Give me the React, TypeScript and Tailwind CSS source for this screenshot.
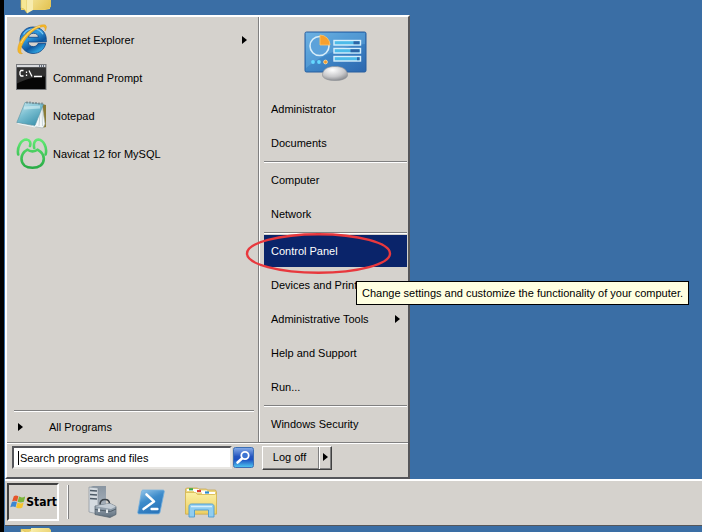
import React from 'react';

type IconProps = { className?: string };

const FolderIcon: React.FC<IconProps> = ({ className }) => (
    <svg className={className} width="32" height="32" viewBox="0 0 32 32" aria-hidden="true">
        <defs>
            <linearGradient id="folderBack" x1="0" y1="0" x2="1" y2="1">
                <stop offset="0" stopColor="#f9efac" />
                <stop offset="1" stopColor="#e2c04c" />
            </linearGradient>
        </defs>
        <path d="M1 3h12l2 3h15v21l-5 1H1z" fill="#e9cf68" />
        <path d="M11 2h18l2 2v21l-4 2-16 1z" fill="url(#folderBack)" />
        <path d="M1 3l6 4v24l-3-4-3-1z" fill="#f6e794" stroke="#d9b84a" strokeWidth="0.6" />
        <path d="M7 7l6-3v24l-6 3.500z" fill="#f7ecae" />
    </svg>
);

const ExplorerIcon = () => (
    <svg width="32" height="32" viewBox="0 0 32 32" aria-hidden="true">
        <defs>
            <linearGradient id="ieBlue" x1="0" y1="0" x2="0.6" y2="1">
                <stop offset="0" stopColor="#1c62b4" />
                <stop offset="0.45" stopColor="#2f9ade" />
                <stop offset="0.75" stopColor="#0d569f" />
                <stop offset="1" stopColor="#31a8e4" />
            </linearGradient>
        </defs>
        <path
            d="M17 3C9.500 3 4 9 4 16C4 23.500 10 29.500 17 29.500C23.500 29.500 28.300 25.500 29.800 19.500H22C21 21.500 19.800 22.600 17.500 22.600C14.300 22.600 12.300 21 12.200 18H30.300V15.500C30.300 8 24.500 3 17 3zM12.500 13.300C12.900 10.800 14.700 9.300 17.600 9.300C20.500 9.300 22.100 10.800 22.400 13.300z"
            fill="url(#ieBlue)"
            stroke="#0f4585"
            strokeWidth="0.8"
            fillRule="evenodd"
        />
        <path d="M7.500 10.500C9.500 6.500 13.500 4.800 17.500 4.800c4 0 7.500 2 9.500 5.500" fill="none" stroke="#7cc8f1" strokeWidth="1.200" />
        <path
            d="M29 7C31 3.500 31 1.500 28.500 0.800C22 -0.500 8.500 8.500 4 17.500C0.500 24.500 1 31 6.500 29.500C4.500 29.300 4 26 6.500 20.500C10.500 12 20 3 27 2.700C29 2.800 29.300 4.500 29 7z"
            fill="#f5b725"
            stroke="#dc9413"
            strokeWidth="0.4"
        />
        <path d="M24 2.300C17 3.500 9 11 5 19" fill="none" stroke="#fde58c" strokeWidth="0.8" />
    </svg>
);

const PromptIcon = () => (
    <svg width="32" height="32" viewBox="0 0 32 32" aria-hidden="true">
        <rect x="0.500" y="2.500" width="29.500" height="25" fill="#060606" stroke="#77797c" />
        <rect x="1" y="3" width="28.500" height="2.500" fill="#d8dadd" />
        <path d="M1 5.500h28.500v9c-12 0-20 3-28.500 7z" fill="#303030" />
        <path d="M23 4h1M25 4h1M27 4h1" stroke="#3e4a5c" strokeWidth="1.500" />
        <path d="M7.500 8.500H5L4 10v2.500L5 14h2.500M10.500 9.500v1.500M10.500 12.500v1.500M13 8.500l3 6M18 14.500h8" fill="none" stroke="#fff" strokeWidth="1.300" />
    </svg>
);

const NotepadIcon = () => (
    <svg width="32" height="32" viewBox="0 0 32 32" aria-hidden="true">
        <defs>
            <linearGradient id="padCover" x1="0" y1="0" x2="0.7" y2="1">
                <stop offset="0" stopColor="#d2edf3" />
                <stop offset="0.5" stopColor="#79bed0" />
                <stop offset="1" stopColor="#3e93ae" />
            </linearGradient>
        </defs>
        <path d="M26 4l4 1v22l-4 1z" fill="#8b7b35" />
        <path d="M26 4l3 20-2 4-12-2z" fill="#f5f8f9" stroke="#9db0b5" strokeWidth="0.6" />
        <path d="M26 8l.5 18M24 12l-1 14" stroke="#bccdd1" strokeWidth="0.8" />
        <path d="M9 2.500L27.500 4L19 25.500L0.800 22.500z" fill="url(#padCover)" stroke="#5793a5" strokeWidth="0.6" />
        <path d="M1.500 23.500L19 27l1-2" fill="none" stroke="#eef6f7" />
        <path d="M11 1.500v2M14 1.500v2M17 2v2M20 2v2M23 2.500v2M26 2.500v2" stroke="#6d7d81" strokeWidth="1.200" />
        <path d="M8 8L24 7" stroke="#d9f1f5" strokeWidth="3" opacity="0.6" />
    </svg>
);

const NavicatIcon = () => (
    <svg width="32" height="32" viewBox="0 0 32 32" aria-hidden="true">
        <defs>
            <linearGradient id="navicatGreen" gradientUnits="userSpaceOnUse" x1="0" y1="1" x2="0" y2="31">
                <stop offset="0" stopColor="#62ea74" />
                <stop offset="1" stopColor="#27a944" />
            </linearGradient>
        </defs>
        <g fill="none" stroke="url(#navicatGreen)" strokeWidth="2.600" strokeLinecap="round" strokeLinejoin="round">
            <path d="M2.200 16.500C0.800 9.500 5 1.500 10.500 1.500C14 1.800 15 5 14 8" />
            <path d="M18.200 10C17.200 5 19 1.500 22.500 1.500C27.500 2 31.500 9.500 29.600 16.500" />
            <path d="M11.500 11.600C8 13.500 5.500 16.500 5.500 20.800C5.500 26.500 10 29.800 16.500 29.800S27.800 26.500 27.800 20.800C27.800 16.500 25 13.500 21.500 11.600C19 14 14 14 11.500 11.600z" />
        </g>
    </svg>
);

const ControlPanelIcon = () => (
    <svg width="64" height="52" viewBox="0 0 64 52" aria-hidden="true">
        <defs>
            <linearGradient id="screen" x1="0" y1="0" x2="1" y2="1">
                <stop offset="0" stopColor="#69aee1" />
                <stop offset="0.4" stopColor="#438dcc" />
                <stop offset="1" stopColor="#2c67af" />
            </linearGradient>
            <radialGradient id="knob" cx="0.4" cy="0.25" r="0.8">
                <stop offset="0" stopColor="#fff" />
                <stop offset="0.6" stopColor="#c8c8ca" />
                <stop offset="1" stopColor="#85878b" />
            </radialGradient>
        </defs>
        <rect x="1" y="3" width="61" height="40" rx="1.500" fill="url(#screen)" stroke="#285f9f" />
        <path d="M2 4h59v11C43 16 18 25 2 39z" fill="#75b9e7" opacity="0.35" />
        <circle cx="15.500" cy="17" r="9.500" fill="#5ca2da" stroke="#d7edf9" strokeWidth="1.600" />
        <path d="M16 16V6a10 10 0 0 1 10 10z" fill="#f7a02d" stroke="#ffc466" strokeWidth="0.800" />
        <g stroke="#d7effc" strokeWidth="1.400" fill="#4dbbe9">
            <rect x="30" y="11.500" width="26.500" height="4.500" />
            <rect x="30" y="19.500" width="26.500" height="4.500" />
            <rect x="30" y="27.500" width="26.500" height="4.500" />
        </g>
        <path d="M49.500 13.700h6M46.500 21.700h9M53 29.700h2.500" stroke="#2d65a5" strokeWidth="3" />
        <circle cx="9" cy="33" r="1.900" fill="#65d9ff" />
        <circle cx="15" cy="33" r="1.900" fill="#65d9ff" />
        <circle cx="21.500" cy="33" r="1.900" fill="#f19b2b" stroke="#ffe0a3" strokeWidth="0.800" />
        <path d="M18.500 46C18.500 40 24 37.500 31 37.500S43.500 40 43.500 46C43.500 49.500 38 51.500 31 51.500S18.500 49.500 18.500 46z" fill="url(#knob)" stroke="#8c8e93" strokeWidth="0.600" />
    </svg>
);

const SearchIcon = () => (
    <svg width="21" height="21" viewBox="0 0 21 21" aria-hidden="true">
        <defs>
            <linearGradient id="searchBg" x1="0" y1="0" x2="0" y2="1">
                <stop offset="0" stopColor="#88aee9" />
                <stop offset="0.45" stopColor="#2555bf" />
                <stop offset="0.6" stopColor="#1c4fc0" />
                <stop offset="1" stopColor="#50c9f2" />
            </linearGradient>
        </defs>
        <rect x="0.500" y="0.500" width="20" height="20" rx="2" fill="url(#searchBg)" stroke="#3c6fb4" />
        <circle cx="12" cy="8.500" r="3.700" fill="#3d74d2" stroke="#fff" strokeWidth="1.800" />
        <path d="M9 11.500L4.500 15.500" stroke="#fff" strokeWidth="2.600" strokeLinecap="round" />
    </svg>
);

const WindowsFlag = () => (
    <svg width="16" height="16" viewBox="-0.500 1 16 14.500" aria-hidden="true">
        <path d="M3.500 2.200C5 1 6.500 1.100 8.300 2.200L6.900 7.600C5.100 6.500 3.300 6.600 1.700 7.600z" fill="#e5562b" />
        <path d="M9 2.600C11 3.800 13 3.800 15.500 2.400L14 7.900C11.800 9 9.600 9 7.500 8z" fill="#7cb53c" />
        <path d="M1.400 8.400C3.200 7.400 4.900 7.400 6.700 8.400L5.300 13.800C3.700 12.700 1.700 12.700 -.2 13.800z" fill="#3d86d0" />
        <path d="M7.300 8.900C9.300 10 11.500 10 13.800 8.800L12.400 14C10.200 15.200 8 15.200 5.900 14z" fill="#f6c42c" />
    </svg>
);

const ServerManagerIcon = () => (
    <svg width="32" height="34" viewBox="0 0 32 34" aria-hidden="true">
        <defs>
            <linearGradient id="toolbox" x1="0" y1="0" x2="0" y2="1">
                <stop offset="0" stopColor="#a9b5c0" />
                <stop offset="1" stopColor="#5f6f7d" />
            </linearGradient>
            <linearGradient id="tower" x1="0" y1="0" x2="0" y2="1">
                <stop offset="0" stopColor="#8995a1" />
                <stop offset="1" stopColor="#b3bcc5" />
            </linearGradient>
        </defs>
        <path d="M4 2.500L8 1h13v25l-8 3z" fill="url(#tower)" />
        <path d="M4 2l9 1v26l-9-2z" fill="#d5dbe0" stroke="#7f8b95" strokeWidth="0.600" />
        <path d="M5 5.500l7 .5M5 9.500l7 .5M5 13.500l7 .5" stroke="#4d5a66" strokeWidth="1.500" />
        <path d="M15 19.500c0-3.500 2-5 5-5s4.500 1.500 4.500 4.500" fill="none" stroke="#3a4148" strokeWidth="1.500" />
        <path d="M10 21l15-2.500 6 3v8l-6 3-15-3z" fill="url(#toolbox)" stroke="#52606c" strokeWidth="0.700" />
        <path d="M10 21l15-2.500 6 3-5 2.500z" fill="#c3ccd4" />
        <path d="M10 24.500l15.500 2 5.500-2.500" fill="none" stroke="#4e5c67" />
        <path d="M14 23.500v3.500M22 24.500v3.500" stroke="#e6ebee" strokeWidth="2" />
    </svg>
);

const PowerShellIcon = () => (
    <svg width="28" height="26" viewBox="0 0 28 24" preserveAspectRatio="none" aria-hidden="true">
        <defs>
            <linearGradient id="shell" x1="0" y1="0" x2="0.5" y2="1">
                <stop offset="0" stopColor="#9ccbed" />
                <stop offset="0.5" stopColor="#3d8bca" />
                <stop offset="1" stopColor="#2b76bb" />
            </linearGradient>
        </defs>
        <path d="M6 1h20c1 0 1.500 .8 1.200 1.800L23 21.500c-.3 1-1 1.500-2 1.500H2C1 23 .6 22.300 .8 21.300L4.500 2.500C4.700 1.500 5.200 1 6 1z" fill="url(#shell)" stroke="#75b1de" strokeWidth="0.800" />
        <path d="M9.500 5l7.500 6.500-10.500 7" fill="none" stroke="#fff" strokeWidth="2.400" strokeLinecap="round" strokeLinejoin="round" />
        <path d="M14.500 18.500h6" stroke="#fff" strokeWidth="2.200" strokeLinecap="round" />
    </svg>
);

const LibraryIcon = () => (
    <svg width="34" height="32" viewBox="0 0 34 32" aria-hidden="true">
        <defs>
            <linearGradient id="libFront" x1="0" y1="0" x2="0" y2="1">
                <stop offset="0" stopColor="#fbf0a4" />
                <stop offset="1" stopColor="#ecce62" />
            </linearGradient>
        </defs>
        <path d="M1.500 4.500V3l1-1h11l1 1h8l1 1h8l1 2v22h-31z" fill="#edd67c" stroke="#c6a449" strokeWidth="0.700" />
        <path d="M3 4h12M10 5.500h13M18 7h13" stroke="#fff" strokeWidth="2" />
        <path d="M5 3.300h4" stroke="#3daa49" strokeWidth="2.200" />
        <path d="M13 5h4" stroke="#d83b31" strokeWidth="2.200" />
        <path d="M21 6.500h4" stroke="#2c8cd0" strokeWidth="2.200" />
        <path d="M1.500 6.500h10l2 2h17l2-1V28h-31z" fill="url(#libFront)" stroke="#d2b14c" strokeWidth="0.700" />
        <path d="M5 31V20.500c0-1.500 1-2.500 2.500-2.500h20c1.500 0 2.500 1 2.500 2.500V31h-5.500v-7h-14v7z" fill="#8fcdf0" stroke="#4c9bd0" strokeWidth="0.900" />
        <path d="M7 20.500h21" stroke="#d6effc" strokeWidth="1.500" />
    </svg>
);

const Arrow: React.FC<IconProps> = ({ className }) => (
    <svg className={className} width="5" height="8" viewBox="0 0 5 8" aria-hidden="true">
        <path d="M0 0l5 4-5 4z" fill="#000" />
    </svg>
);

const Divider = () => <div className="h-[3px] border-t border-[#808080] after:block after:h-px after:bg-white" />;

const programs = [
    { name: 'Internet Explorer', icon: <ExplorerIcon />, submenu: true },
    { name: 'Command Prompt', icon: <PromptIcon /> },
    { name: 'Notepad', icon: <NotepadIcon /> },
    { name: 'Navicat 12 for MySQL', icon: <NavicatIcon /> },
];

const PlaceItem: React.FC<{ label: string; submenu?: boolean }> = ({ label, submenu }) => (
    <button type="button" className="flex h-[34px] w-full items-center justify-between px-[7px] pb-0.5 text-left">
        {label}
        {submenu && <Arrow />}
    </button>
);

const ActivePlaceItem = () => (
    <div className="relative h-[34px]">
        <button type="button" aria-describedby="place-tip" className="flex h-8 w-full items-center bg-[#0a246a] pl-[7px] text-left text-white">
            Control Panel
        </button>
        <svg className="pointer-events-none absolute -top-0.5 -left-[19px]" width="147" height="42" viewBox="0 0 147 42" aria-hidden="true">
            <ellipse cx="73.500" cy="20.500" rx="71.500" ry="19.300" fill="none" stroke="#e8383d" strokeWidth="2.400" />
        </svg>
        <div id="place-tip" role="tooltip" className="absolute top-[46px] left-[92px] z-10 flex h-6 items-center border border-black bg-[#ffffe1] px-[5px] whitespace-nowrap">
            Change settings and customize the functionality of your computer.
        </div>
    </div>
);

const StartMenu = () => (
    <div className="w-[405px] border-2 border-t-white border-r-[#55565a] border-b-[#55565a] border-l-white bg-[#d5d2cd]">
        <div className="flex">
            <div className="flex flex-1 flex-col pt-1">
                {programs.map(program => (
                    <button key={program.name} type="button" className="flex h-[38px] items-center gap-[5px] pr-[11px] pl-[9px] text-left">
                        {program.icon}
                        <span className="flex-1">{program.name}</span>
                        {program.submenu && <Arrow />}
                    </button>
                ))}
                <div className="mt-auto pr-1 pl-[7px]">
                    <Divider />
                </div>
                <button type="button" className="flex h-[29px] items-center gap-[26px] pb-0.5 pl-[11px] text-left">
                    <Arrow />
                    All Programs
                </button>
            </div>
            <div className="w-[150px] border-l border-[#808080]">
                <div className="border-l border-white pr-px pl-1">
                    <div className="flex h-[76px] justify-center pt-3">
                        <ControlPanelIcon />
                    </div>
                    <PlaceItem label="Administrator" />
                    <PlaceItem label="Documents" />
                    <Divider />
                    <PlaceItem label="Computer" />
                    <PlaceItem label="Network" />
                    <Divider />
                    <ActivePlaceItem />
                    <PlaceItem label="Devices and Printers" />
                    <PlaceItem label="Administrative Tools" submenu />
                    <PlaceItem label="Help and Support" />
                    <PlaceItem label="Run..." />
                    <Divider />
                    <PlaceItem label="Windows Security" />
                </div>
            </div>
        </div>
        <div className="flex h-[35px] items-start border-t border-[#808080] pl-[5px] shadow-[inset_0_1px_0_#fff]">
            <div className="mt-[3px] flex h-[23px] w-[220px] items-center border-2 border-t-[#55565a] border-r-[#e8e6e2] border-b-[#e8e6e2] border-l-[#55565a] bg-white pl-1">
                <span className="h-3.5 w-px bg-black" />
                <input
                    type="text"
                    aria-label="Search programs and files"
                    placeholder="Search programs and files"
                    className="min-w-0 flex-1 bg-transparent pl-px placeholder:text-black focus:outline-none"
                />
            </div>
            <button type="button" aria-label="Search" className="mt-1 ml-px">
                <SearchIcon />
            </button>
            <div className="mt-[3px] ml-2 flex h-6 border border-t-white border-r-[#404040] border-b-[#404040] border-l-white shadow-[inset_-1px_-1px_0_#808080]">
                <button type="button" className="w-14 border-r border-[#808080] pr-0.5 pb-0.5">
                    Log off
                </button>
                <button type="button" aria-label="More options" className="flex w-3 items-center justify-center border-l border-white pb-0.5">
                    <Arrow />
                </button>
            </div>
        </div>
    </div>
);

const Taskbar = () => (
    <div className="flex h-[47px] items-start border-t-2 border-b border-t-white border-b-[#55565a] bg-[#d5d2cd] pt-0.5 pl-0.5">
        <button type="button" className="flex h-[38px] w-[52px] items-center gap-px border-2 border-t-[#404040] border-r-white border-b-white border-l-[#404040] pl-px font-['DejaVu_Sans_Condensed',sans-serif] text-xs font-bold">
            <WindowsFlag />
            Start
        </button>
        <div className="mt-0.5 ml-2 h-[34px] w-0.5 border-r border-l border-r-[#808080] border-l-white" />
        <div className="ml-[7px] flex h-[38px] items-center">
            <button type="button" aria-label="Server Manager" className="flex w-[50px] justify-center"><ServerManagerIcon /></button>
            <button type="button" aria-label="Windows PowerShell" className="flex w-[50px] justify-center"><PowerShellIcon /></button>
            <button type="button" aria-label="Windows Explorer" className="flex w-[50px] justify-center"><LibraryIcon /></button>
        </div>
    </div>
);

const App = () => (
    <div className="flex min-h-screen bg-black pl-1 font-['Liberation_Sans','Noto_Sans',sans-serif] text-[11px] leading-4 text-black">
        <div className="relative flex flex-1 flex-col overflow-hidden bg-[#3a6ea5] pl-px">
            <FolderIcon className="absolute -top-[18px] left-4" />
            <div className="flex flex-1 items-end">
                <StartMenu />
            </div>
            <Taskbar />
            <div className="relative h-1.5">
                <FolderIcon className="absolute top-0 left-[15px]" />
            </div>
        </div>
    </div>
);

export default App;
